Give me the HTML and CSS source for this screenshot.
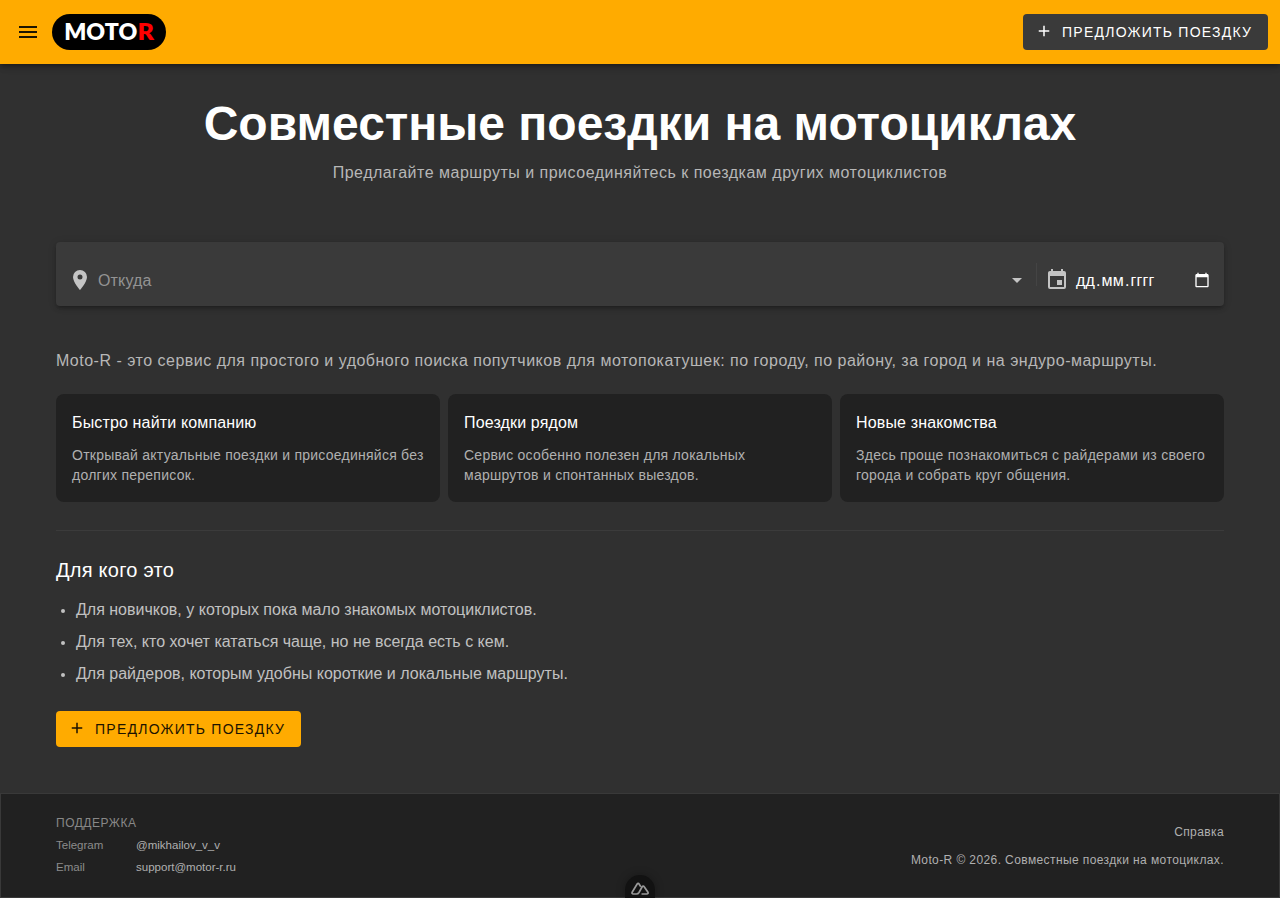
FILE: index.html
```html
<!DOCTYPE html>
<html lang="ru">
<head>
<meta charset="utf-8">
<title>Moto-R</title>
<link rel="stylesheet" href="styles.css">
</head>
<body>
<header class="appbar">
  <svg class="menu" viewBox="0 0 24 24"><path d="M3 6h18v2H3zM3 11h18v2H3zM3 16h18v2H3z"/></svg>
  <svg class="logo" viewBox="0 0 114 36">
    <rect width="114" height="36" rx="18" fill="#000"/>
    <text class="logo-text" x="12.2" y="25.7" textLength="73" lengthAdjust="spacingAndGlyphs" fill="#fff">MOTO</text>
    <text class="logo-text" x="85.6" y="25.7" textLength="16.500" lengthAdjust="spacingAndGlyphs" fill="#f00">R</text>
  </svg>
  <a class="btn btn-dark"><svg class="plus" viewBox="0 0 24 24"><path d="M19 13h-6v6h-2v-6H5v-2h6V5h2v6h6z"/></svg><span>Предложить поездку</span></a>
</header>
<main class="container">
  <h1 class="title">Совместные поездки на мотоциклах</h1>
  <p class="subtitle">Предлагайте маршруты и присоединяйтесь к поездкам других мотоциклистов</p>
  <div class="search">
    <svg class="icon" viewBox="0 0 24 24"><path d="M12 11.5A2.5 2.5 0 0 1 9.5 9 2.500 2.500 0 0 1 12 6.500 2.500 2.500 0 0 1 14.500 9 2.500 2.500 0 0 1 12 11.500M12 2a7 7 0 0 0-7 7c0 5.250 7 13 7 13s7-7.750 7-13a7 7 0 0 0-7-7"/></svg>
    <span class="from">Откуда</span>
    <svg class="icon arrow" viewBox="0 0 24 24"><path d="m7 10 5 5 5-5z"/></svg>
    <span class="divider"></span>
    <svg class="icon" viewBox="0 0 24 24"><path d="M19 19H5V8h14m-3-7v2H8V1H6v2H5c-1.110 0-2 .890-2 2v14a2 2 0 0 0 2 2h14a2 2 0 0 0 2-2V5a2 2 0 0 0-2-2h-1V1m-1 11h-5v5h5z"/></svg>
    <span class="date"><span class="field">дд</span><span>.</span><span class="field">мм</span><span>.</span><span class="field">гггг</span></span>
    <svg class="picker" viewBox="0 0 24 24"><path d="M20 3h-1V1h-2v2H7V1H5v2H4c-1.100 0-2 .900-2 2v16c0 1.100.900 2 2 2h16c1.100 0 2-.900 2-2V5c0-1.100-.900-2-2-2m0 18H4V8h16z"/></svg>
  </div>
  <p class="intro">Moto-R - это сервис для простого и удобного поиска попутчиков для мотопокатушек: по городу, по району, за город и на эндуро-маршруты.</p>
  <div class="cards">
    <article class="card"><h3 class="card-title">Быстро найти компанию</h3><p class="card-text">Открывай актуальные поездки и присоединяйся без долгих переписок.</p></article>
    <article class="card"><h3 class="card-title">Поездки рядом</h3><p class="card-text">Сервис особенно полезен для локальных маршрутов и спонтанных выездов.</p></article>
    <article class="card"><h3 class="card-title">Новые знакомства</h3><p class="card-text">Здесь проще познакомиться с райдерами из своего города и собрать круг общения.</p></article>
  </div>
  <hr class="rule">
  <h2 class="who">Для кого это</h2>
  <ul class="list">
    <li>Для новичков, у которых пока мало знакомых мотоциклистов.</li>
    <li>Для тех, кто хочет кататься чаще, но не всегда есть с кем.</li>
    <li>Для райдеров, которым удобны короткие и локальные маршруты.</li>
  </ul>
  <a class="btn btn-amber"><svg class="plus" viewBox="0 0 24 24"><path d="M19 13h-6v6h-2v-6H5v-2h6V5h2v6h6z"/></svg><span>Предложить поездку</span></a>
</main>
<footer class="footer">
  <div class="support">
    <div class="support-title">ПОДДЕРЖКА</div>
    <div class="row"><span class="label">Telegram</span><span>@mikhailov_v_v</span></div>
    <div class="row"><span class="label">Email</span><span>support@motor-r.ru</span></div>
  </div>
  <div class="legal"><span>Справка</span><span>Moto-R © 2026. Совместные поездки на мотоциклах.</span></div>
</footer>
<div class="nuxt"><svg class="nuxt-icon" viewBox="0 0 18 14"><path d="M5.500 12H2.400C1 12 .700 11 1.300 10L6 2.200c.600-1 1.600-1 2.200 0L9.800 4.800M5.500 12C7 12 7.500 11.300 8 10.500L11.200 4.800c.600-1 1.400-1 2 0L16.800 10c.600 1 .300 2-1.100 2H10.500"/></svg></div>
</body>
</html>
```
FILE: styles.css
```css
* { box-sizing: border-box; margin: 0; padding: 0; }
body { height: 898px; display: flex; flex-direction: column; overflow: hidden; background: #303030; color: #fff; font: 16px/24px "Liberation Sans", Arial, sans-serif; }
svg { flex: none; fill: currentColor; }
.appbar { height: 64px; flex: none; display: flex; align-items: center; padding: 0 12px 0 16px; background: #ffab00; box-shadow: 0 2px 4px -1px rgba(0,0,0,.3), 0 4px 5px rgba(0,0,0,.14), 0 1px 10px rgba(0,0,0,.12); }
.menu { width: 24px; height: 24px; color: #1c1500; }
.logo { width: 114px; height: 36px; margin-left: 12px; }
.logo-text { font: 800 22.5px Lato, sans-serif; }
.btn { display: flex; align-items: center; width: 245px; height: 36px; padding-left: 12px; border-radius: 4px; font-size: 14px; letter-spacing: 1.25px; text-transform: uppercase; white-space: nowrap; }
.plus { width: 18px; height: 18px; margin-right: 9px; position: relative; top: -1px; }
.btn-dark { margin-left: auto; background: #3a3a3a; }
.btn-amber { margin-top: 25px; background: #ffab00; color: #1c1300; }
.container { flex: none; width: 1168px; margin: 0 auto; }
.title { margin-top: 36px; font-size: 48px; line-height: 48px; text-align: center; white-space: nowrap; }
.subtitle { margin-top: 13px; line-height: 24px; text-align: center; letter-spacing: .5px; color: #b7b7b7; }
.search { display: flex; align-items: center; height: 64px; margin-top: 57px; padding: 12px 14px 0 12px; border-radius: 4px; background: #3a3a3a; box-shadow: 0 3px 3px -2px rgba(0,0,0,.2), 0 3px 4px rgba(0,0,0,.14), 0 1px 8px rgba(0,0,0,.12); color: #c4c4c4; }
.icon { width: 24px; height: 24px; }
.from { margin-left: 6px; padding-top: 2px; color: #939393; letter-spacing: .15px; }
.arrow { margin-left: auto; }
.divider { width: 1px; height: 23px; margin: 0 8px 12px 7px; background: #444; }
.date { display: flex; width: 117px; margin-left: 7px; padding-top: 2px; color: #fff; letter-spacing: .15px; }
.field { padding-right: 1px; }
.field + span { padding-right: 1px; }
.picker { width: 16px; height: 16px; margin-left: 1px; color: #fff; }
.intro { margin-top: 43px; letter-spacing: .5px; color: #b7b7b7; white-space: nowrap; }
.cards { display: grid; grid-template-columns: repeat(3, 1fr); gap: 8px; margin-top: 21px; }
.card { height: 108px; padding: 16px; border-radius: 8px; background: #212121; }
.card-title { font-size: 16px; font-weight: 400; line-height: 26px; letter-spacing: .15px; }
.card-text { margin-top: 9px; font-size: 14px; line-height: 20px; letter-spacing: .25px; color: #b0b0b0; }
.rule { margin-top: 28px; border: 0; border-top: 1px solid #3b3b3b; }
.who { margin-top: 23px; font-size: 20px; font-weight: 400; line-height: 32px; letter-spacing: .25px; }
.list { padding-left: 5px; margin-top: 12px; list-style: none; color: #c1c1c1; }
.list li { display: flex; align-items: center; line-height: 24px; margin-bottom: 8px; }
.list li::before { content: ""; width: 4px; height: 4px; margin: 2px 11px 0 0; border-radius: 50%; background: currentColor; }
.list li:last-child { margin-bottom: 0; }
.footer { display: flex; justify-content: space-between; align-items: center; height: 105px; flex: none; margin-top: auto; padding: 0 55px; border: 1px solid #393939; background: #212121; font-size: 12px; color: #b0b0b0; }
.support-title { line-height: 20px; margin-bottom: 1px; color: #888; letter-spacing: .5px; }
.support { padding-bottom: 1px; }
.row { display: flex; line-height: 22px; font-size: 11.52px; }
.label { width: 80px; color: #8c8c8c; }
.legal { display: flex; flex-direction: column; align-items: flex-end; gap: 8px; line-height: 20px; letter-spacing: .4px; }
.nuxt { position: absolute; left: 625px; top: 875px; width: 30px; height: 23px; padding: 7px 6px 0; border-radius: 15px 15px 0 0; background: #121212; box-shadow: 0 0 10px rgba(0,0,0,.3); color: #999; }
.nuxt-icon { display: block; width: 18px; height: 14px; fill: none; stroke: currentColor; stroke-width: 1.7; }
```
